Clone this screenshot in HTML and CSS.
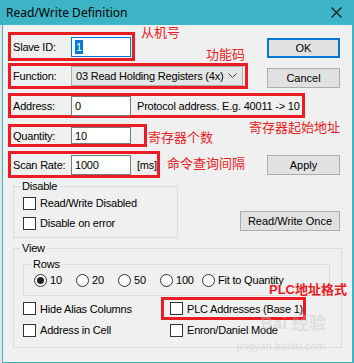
FILE: index.html
```html
<!DOCTYPE html>
<html lang="en">
<head>
  <meta charset="UTF-8" />
  <meta name="viewport" content="width=device-width, initial-scale=1.0"/>
  <title>Read/Write Definition</title>
  <link rel="stylesheet" href="styles.css">
</head>
<body>
  <div class="titlebar">
    <span class="title">Read/Write Definition</span>
    <svg class="close" width="11" height="11" viewBox="0 0 11 11">
      <path d="M0.5 0.5 L10.5 10.5 M10.5 0.5 L0.5 10.5" stroke="#111" stroke-width="1.1" fill="none"/>
    </svg>
  </div>

  <div class="frame">
    <!-- top form rows -->
    <div class="row row-slave">
      <div class="mark mark-slave">
        <span class="label">Slave ID:</span>
        <div class="field focused"><span class="sel">1</span></div>
      </div>
      <button class="btn btn-default btn-ok">OK</button>
    </div>

    <div class="row row-func">
      <div class="mark mark-func">
        <span class="label">Function:</span>
        <div class="select">
          <span>03 Read Holding Registers (4x)</span>
          <svg width="9" height="6" viewBox="0 0 9 6"><polyline points="0.5,0.5 4.5,4.5 8.5,0.5" stroke="#444" fill="none"/></svg>
        </div>
      </div>
      <button class="btn btn-cancel">Cancel</button>
    </div>

    <div class="row row-addr">
      <div class="mark mark-addr">
        <span class="label">Address:</span>
        <div class="field">0</div>
        <span class="hint">Protocol address. E.g. 40011 -&gt; 10</span>
      </div>
    </div>

    <div class="row row-qty">
      <div class="mark mark-qty">
        <span class="label">Quantity:</span>
        <div class="field">10</div>
      </div>
    </div>

    <div class="row row-scan">
      <div class="mark mark-scan">
        <span class="label">Scan Rate:</span>
        <div class="field">1000</div>
        <span class="hint">[ms]</span>
      </div>
      <button class="btn btn-apply">Apply</button>
    </div>

    <!-- disable group -->
    <div class="lower">
      <div class="group group-disable">
        <span class="legend">Disable</span>
        <div class="check"><span class="box"></span>Read/Write Disabled</div>
        <div class="check"><span class="box"></span>Disable on error</div>
      </div>
      <button class="btn btn-once">Read/Write Once</button>
    </div>

    <!-- view group -->
    <div class="group group-view">
      <span class="legend">View</span>
      <div class="group group-rows">
        <span class="legend">Rows</span>
        <div class="radios">
          <div class="radio"><span class="dot on"></span>10</div>
          <div class="radio"><span class="dot"></span>20</div>
          <div class="radio"><span class="dot"></span>50</div>
          <div class="radio"><span class="dot"></span>100</div>
          <div class="radio radio-last"><span class="dot"></span>Fit to Quantity</div>
        </div>
      </div>
      <div class="checks">
        <div class="check"><span class="box"></span>Hide Alias Columns</div>
        <div class="check mark-plc"><span class="box"></span>PLC Addresses (Base 1)</div>
        <div class="check"><span class="box"></span>Address in Cell</div>
        <div class="check check-right"><span class="box"></span>Enron/Daniel Mode</div>
      </div>
    </div>

    <!-- red annotations -->
    <span class="note note-slave">从机号</span>
    <span class="note note-func">功能码</span>
    <span class="note note-addr">寄存器起始地址</span>
    <span class="note note-qty">寄存器个数</span>
    <span class="note note-scan">命令查询间隔</span>
    <span class="note note-plc"><b>PLC</b>地址格式</span>

    <div class="watermark">
      <span class="wm-logo">Bai 经验</span>
      <span class="wm-url">jingyan.baidu.com</span>
    </div>
  </div>
</body>
</html>
```

FILE: styles.css
```css
:root {
  --teal: #3cb4c6;
  --red: #ec1c24;
  --face: #f0f0f0;
  --btn: #e1e1e1;
  --btn-border: #adadad;
  --blue: #0078d7;
  --group: #dcdcdc;
}

* {
  margin: 0;
  padding: 0;
  box-sizing: border-box;
}

body {
  width: 354px;
  height: 363px;
  overflow: hidden;
  background: #e4e4e4;
  font-family: "Liberation Sans", Arial, sans-serif;
  font-size: 11px;
  letter-spacing: -0.2px;
  color: #000;
}

.titlebar {
  height: 25px;
  background: var(--teal);
  display: flex;
  align-items: center;
  justify-content: space-between;
  padding: 0 12px 0 6px;
}

.title {
  font-family: "Noto Sans", "Open Sans", sans-serif;
  font-size: 12px;
  letter-spacing: 0;
}

.frame {
  position: relative;
  margin-left: 2px;
  height: 338px;
  padding-top: 7px;
  background: var(--face);
  border: solid var(--teal);
  border-width: 0 2px 1px 1px;
}

/* form rows */
.row {
  display: flex;
  justify-content: space-between;
  align-items: flex-start;
  margin: 0 12px 0 5px;
}

.row-func { margin-top: 2px; }
.row-addr { margin-top: 4px; }
.row-qty { margin-top: 6px; }
.row-scan { margin-top: 4px; }

.mark {
  display: flex;
  align-items: center;
  border: 3px solid var(--red);
  padding-left: 2px;
  white-space: nowrap;
}

.mark-slave { width: 127px; height: 29px; }
.mark-func { width: 240px; height: 26px; }
.mark-addr { width: 297px; height: 25px; }
.mark-qty { width: 139px; height: 23px; }
.mark-scan { width: 152px; height: 27px; }

.label {
  width: 58px;
  flex-shrink: 0;
}

.field {
  width: 60px;
  height: 20px;
  flex-shrink: 0;
  background: #fff;
  border: 1px solid #7a7a7a;
  padding-left: 3px;
  display: flex;
  align-items: center;
}

.mark-qty .field { height: 17px; }

.field.focused {
  border-color: var(--blue);
}

.sel {
  background: var(--blue);
  color: #fff;
  padding: 0 1px;
  line-height: 14px;
}

.hint {
  margin-left: 6px;
}

.select {
  width: 172px;
  height: 20px;
  flex-shrink: 0;
  background: #e5e5e5;
  border: 1px solid #acacac;
  display: flex;
  align-items: center;
  justify-content: space-between;
  padding: 0 5px 0 4px;
}

/* buttons */
.btn {
  font: inherit;
  color: #000;
  background: var(--btn);
  border: 1px solid var(--btn-border);
  width: 73px;
  height: 20px;
}

.btn-default { border: 2px solid var(--blue); }
.btn-ok { margin-top: 6px; }
.btn-cancel { margin-top: 5px; }
.btn-apply { margin-top: 4px; }

/* groups */
.lower {
  display: flex;
  justify-content: space-between;
  align-items: flex-end;
  margin: 8px 12px 0 10px;
}

.group {
  border: 1px solid var(--group);
}

.legend {
  display: block;
  width: max-content;
  margin: -8px 0 0 6px;
  padding: 0 2px;
  line-height: 14px;
  background: var(--face);
}

.group-disable {
  width: 165px;
  height: 52px;
}

.btn-once {
  width: 100px;
  margin-bottom: 7px;
}

.check {
  display: flex;
  align-items: center;
  gap: 4px;
  height: 20px;
  padding-left: 9px;
  white-space: nowrap;
}

.box {
  width: 13px;
  height: 13px;
  background: #fff;
  border: 1px solid #333;
  flex-shrink: 0;
}

.group-view {
  width: 329px;
  height: 100px;
  margin: 10px 0 0 10px;
}

.group-rows {
  width: 307px;
  height: 32px;
  margin: 9px 0 0 9px;
}

.group-rows .legend { margin-left: 7px; }

.radios {
  display: flex;
  align-items: center;
  height: 18px;
  padding-left: 10px;
}

.radio {
  display: flex;
  align-items: center;
  gap: 3px;
  width: 42px;
  flex-shrink: 0;
  white-space: nowrap;
}

.radio-last { width: auto; }

.dot {
  width: 13px;
  height: 13px;
  flex-shrink: 0;
  border: 1px solid #333;
  border-radius: 50%;
  background: #fff;
  display: flex;
  align-items: center;
  justify-content: center;
}

.dot.on::after {
  content: "";
  width: 7px;
  height: 7px;
  border-radius: 50%;
  background: #222;
}

.checks {
  display: grid;
  grid-template-columns: 147px 145px;
  grid-template-rows: 23px 20px;
  align-items: center;
  margin-top: 1px;
}

.mark-plc {
  height: 23px;
  border: 3px solid var(--red);
  padding-left: 6px;
}

.check-right { padding-left: 9px; }

/* annotations */
.note {
  position: absolute;
  font-family: "Noto Sans CJK SC", sans-serif;
  font-size: 13px;
  line-height: 13px;
  letter-spacing: 0;
  color: var(--red);
  white-space: nowrap;
}

.note-slave { left: 138px; top: 0; }
.note-func { left: 203px; top: 22px; }
.note-addr { left: 246px; top: 95px; }
.note-qty { left: 145px; top: 105px; }
.note-scan { left: 164px; top: 131px; }
.note-plc { left: 266px; top: 257px; font-weight: bold; }
.note-plc b { font-family: "Liberation Sans", Arial, sans-serif; }

.watermark {
  position: absolute;
  left: 234px;
  top: 284px;
  display: flex;
  flex-direction: column;
  align-items: flex-end;
  color: rgba(190, 190, 190, 0.4);
  letter-spacing: 0;
  pointer-events: none;
}

.wm-logo {
  font-family: "Liberation Sans", "Noto Sans CJK SC", sans-serif;
  font-size: 17px;
  font-weight: bold;
}

.wm-url {
  font-size: 11px;
  margin-top: 6px;
}
```
